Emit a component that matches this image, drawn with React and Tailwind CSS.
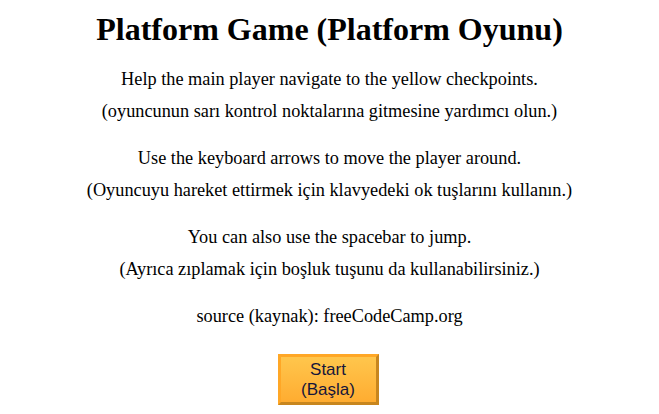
const groups = [
  [
    "Help the main player navigate to the yellow checkpoints.",
    "(oyuncunun sarı kontrol noktalarına gitmesine yardımcı olun.)",
  ],
  [
    "Use the keyboard arrows to move the player around.",
    "(Oyuncuyu hareket ettirmek için klavyedeki ok tuşlarını kullanın.)",
  ],
  [
    "You can also use the spacebar to jump.",
    "(Ayrıca zıplamak için boşluk tuşunu da kullanabilirsiniz.)",
  ],
  ["source (kaynak): freeCodeCamp.org"],
];

export default function App() {
  return (
    <div className="min-h-[414px] w-full bg-white text-black flex flex-col items-center font-['Liberation_Serif',serif]">
      <h1 className="mt-[12px] text-[32px] font-bold leading-[35px]">
        Platform Game (Platform Oyunu)
      </h1>
      <div className="mt-[16px] flex flex-col items-center gap-[15px]">
        {groups.map((lines, i) => (
          <div key={i} className="flex flex-col items-center">
            {lines.map((line) => (
              <p key={line} className="text-[18.3px] leading-[32px]">
                {line}
              </p>
            ))}
          </div>
        ))}
      </div>
      <button className="mt-[22px] mr-[3px] w-[101px] h-[51px] border-[3px] border-t-[#ffa726] border-l-[#ffa726] border-b-[#c8861e] border-r-[#c8861e] bg-gradient-to-b from-[#ffc64c] to-[#ffac30] font-['Liberation_Sans',sans-serif] text-[17px] leading-[20px] text-[#16163a]">
        Start
        <br />
        (Başla)
      </button>
    </div>
  );
}
